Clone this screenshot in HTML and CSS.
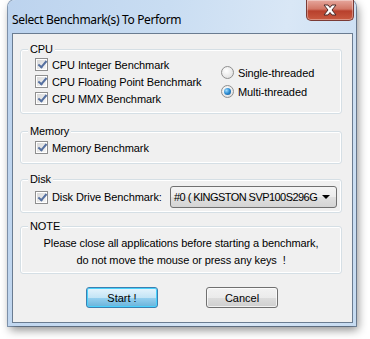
FILE: index.html
```html
<!DOCTYPE html>
<html lang="en">
<head>
    <meta charset="UTF-8">
    <title>Select Benchmark(s) To Perform</title>
    <link rel="stylesheet" href="styles.css">
</head>
<body>

<div class="window">
    <!-- Title bar -->
    <div class="titlebar">
        <span class="title">Select Benchmark(s) To Perform</span>
        <span class="close-btn">
            <svg width="18" height="12" viewBox="0 0 18 12">
                <path d="M3 1 L7 1 L9 3.5 L11 1 L15 1 L11 6 L15 11 L11 11 L9 8.5 L7 11 L3 11 L7 6 Z" fill="#fff" stroke="#4a2a28" stroke-width="1" stroke-linejoin="round"/>
            </svg>
        </span>
    </div>

    <!-- Client area -->
    <div class="client">

        <div class="group group-cpu">
            <span class="caption">CPU</span>
            <div class="cpu-cols">
                <div class="col-checks">
                    <div class="row"><span class="check"></span>CPU Integer Benchmark</div>
                    <div class="row"><span class="check"></span>CPU Floating Point Benchmark</div>
                    <div class="row"><span class="check"></span>CPU MMX Benchmark</div>
                </div>
                <div class="col-radios">
                    <div class="row radio-row"><span class="radio"></span>Single-threaded</div>
                    <div class="row radio-row"><span class="radio on"></span>Multi-threaded</div>
                </div>
            </div>
        </div>

        <div class="group group-mem">
            <span class="caption">Memory</span>
            <div class="row"><span class="check"></span>Memory Benchmark</div>
        </div>

        <div class="group group-disk">
            <span class="caption">Disk</span>
            <div class="disk-row">
                <div class="row"><span class="check"></span>Disk Drive Benchmark:</div>
                <div class="select">
                    <span class="select-text">#0 ( KINGSTON SVP100S296G</span>
                    <span class="arrow"></span>
                </div>
            </div>
        </div>

        <div class="group group-note">
            <span class="caption">NOTE</span>
            <p class="note">Please close all applications before starting a benchmark,<br>do not move the mouse or press any keys &nbsp;!</p>
        </div>

        <div class="buttons">
            <button class="btn btn-default">Start !</button>
            <button class="btn">Cancel</button>
        </div>

    </div>
</div>

</body>
</html>
```

FILE: styles.css
```css
html, body {
    margin: 0;
    background: #fff;
}
body {
    width: 370px;
    height: 339px;
    overflow: hidden;
    font-family: "Liberation Sans", Arial, sans-serif;
    font-size: 11px;
    letter-spacing: -0.1px;
    color: #000;
}
.window {
    margin-left: 8px;
    width: 348px;
    height: 326px;
    box-sizing: border-box;
    padding: 0 3px 3px 4px;
    border-radius: 7px 7px 0 0;
    background: linear-gradient(100deg, #bcd3ee 0%, #c9ddf2 40%, #d9e7f6 70%, #c6dbf1 100%);
    box-shadow: 2px 4px 10px rgba(0, 0, 0, 0.45), 0 0 0 1px #8fa6c2;
}
.titlebar {
    height: 33px;
    display: flex;
    align-items: flex-start;
    justify-content: space-between;
}
.title {
    font-family: "Noto Sans", "Open Sans", sans-serif;
    font-size: 12px;
    letter-spacing: -0.35px;
    margin-top: 11px;
    color: #000;
}
.close-btn {
    width: 46px;
    height: 20px;
    margin-right: -1px;
    display: flex;
    align-items: center;
    justify-content: center;
    border: 1px solid #7a3b36;
    border-top: none;
    border-radius: 0 0 5px 5px;
    background: linear-gradient(#e6a79d 0%, #d27766 45%, #b8402c 55%, #c95a40 100%);
    box-shadow: inset 0 0 0 1px rgba(255, 255, 255, 0.35);
}
.client {
    height: 290px;
    box-sizing: border-box;
    border: 1px solid #6a7c91;
    background: #f0f0f0;
    padding: 15px 10px 0 7px;
}
.group {
    position: relative;
    box-sizing: border-box;
    border: 1px solid #d5dfe5;
    border-radius: 3px;
    box-shadow: inset 0 0 0 1px #fff;
}
.caption {
    position: absolute;
    top: -8px;
    left: 7px;
    padding: 0 2px;
    background: #f0f0f0;
    line-height: 14px;
}
.row {
    display: flex;
    align-items: center;
    height: 17px;
}
.check {
    position: relative;
    width: 9px;
    height: 9px;
    margin: 0 4px 0 14px;
    padding: 1px;
    border: 1px solid #8f8f8f;
    background: linear-gradient(135deg, #d8d8d8, #f6f6f6) content-box, #fff;
}
.check::after {
    content: "";
    position: absolute;
    left: 4px;
    top: 0;
    width: 3px;
    height: 7px;
    border: solid #5570a0;
    border-width: 0 2px 2px 0;
    transform: rotate(40deg);
}
.group-cpu {
    height: 65px;
    padding-top: 6px;
}
.cpu-cols {
    display: flex;
}
.col-checks {
    width: 200px;
}
.col-radios {
    padding-top: 7px;
}
.radio-row {
    height: 19px;
}
.radio {
    position: relative;
    width: 11px;
    height: 11px;
    margin-right: 4px;
    border: 1px solid #8f8f8f;
    border-radius: 50%;
    background: radial-gradient(circle at 40% 35%, #fff 0%, #e4e4e4 70%, #d0d0d0 100%);
}
.radio.on::after {
    content: "";
    position: absolute;
    left: 2px;
    top: 2px;
    width: 7px;
    height: 7px;
    border-radius: 50%;
    background: radial-gradient(circle at 35% 35%, #9fdcff 0%, #2b8ad0 50%, #0e4f8a 100%);
}
.group-mem {
    height: 33px;
    margin-top: 17px;
    padding-top: 7px;
}
.group-disk {
    height: 34px;
    margin-top: 15px;
    padding-top: 6px;
}
.disk-row {
    display: flex;
    align-items: center;
    justify-content: space-between;
    padding-right: 4px;
}
.select {
    width: 167px;
    height: 22px;
    box-sizing: border-box;
    border: 1px solid #707070;
    border-radius: 3px;
    background: linear-gradient(#f4f4f4 0%, #ececec 50%, #e0e0e0 51%, #d4d4d4 100%);
    display: flex;
    align-items: center;
    padding-left: 3px;
}
.select-text {
    flex: 1;
    min-width: 0;
    white-space: nowrap;
    letter-spacing: -0.55px;
}
.arrow {
    flex-shrink: 0;
    width: 0;
    height: 0;
    margin: 0 6px 0 4px;
    border-left: 4px solid transparent;
    border-right: 4px solid transparent;
    border-top: 4px solid #000;
}
.group-note {
    height: 48px;
    margin-top: 13px;
}
.note {
    margin: 8px 0 0;
    text-align: center;
    line-height: 17px;
}
.buttons {
    display: flex;
    margin-top: 13px;
    padding-left: 66px;
    gap: 48px;
}
.btn {
    width: 72px;
    height: 21px;
    padding: 0;
    font-family: inherit;
    font-size: 11px;
    color: #000;
    border: 1px solid #707070;
    border-radius: 3px;
    background: linear-gradient(#f2f2f2 0%, #ebebeb 50%, #dddddd 51%, #cfcfcf 100%);
    box-shadow: inset 0 0 0 1px rgba(255, 255, 255, 0.7);
}
.btn-default {
    border-color: #3c7fb1;
    background: linear-gradient(#e5f4fc 0%, #c4e5f6 50%, #98d1ef 51%, #68b3db 100%);
    box-shadow: inset 0 0 0 1px #48d1fb;
}
```
